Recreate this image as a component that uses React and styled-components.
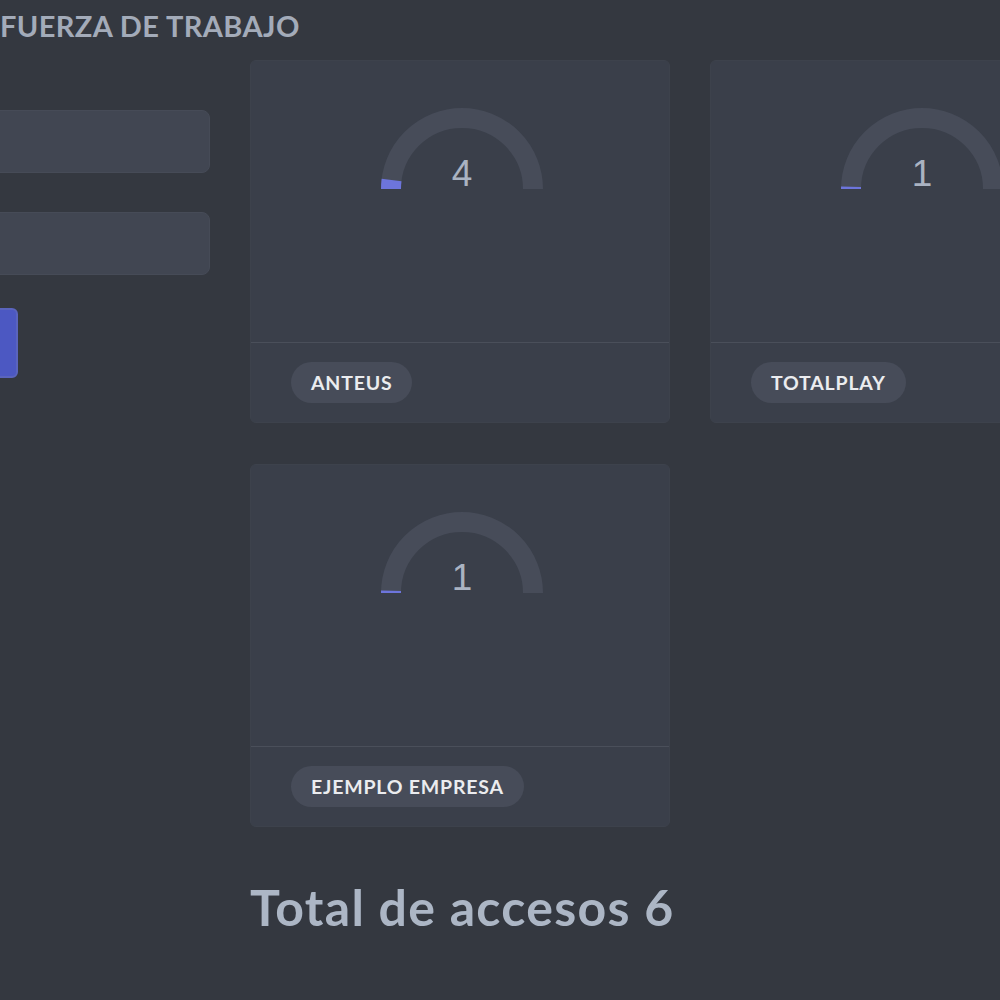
import React from "react";
import styled, { createGlobalStyle } from "styled-components";

const GlobalStyle = createGlobalStyle`
  html, body { margin: 0; padding: 0; }
  body {
    background: #343840;
    font-family: "Lato", "Noto Sans", sans-serif;
    overflow: hidden;
  }
`;

const Page = styled.div`
  width: 1000px;
  height: 1000px;
  overflow: hidden;
  padding-top: 7px;
  box-sizing: border-box;
`;

const Title = styled.h1`
  margin: 0;
  font-size: 29px;
  line-height: 38px;
  font-weight: 700;
  color: #a3abb9;
  letter-spacing: 0.4px;
`;

const Main = styled.div`
  display: grid;
  grid-template-columns: 410px auto;
  column-gap: 40px;
  margin-left: -200px;
  margin-top: 15px;
`;

const Sidebar = styled.div`
  display: flex;
  flex-direction: column;
  align-items: flex-start;
  padding-top: 50px;
`;

const Input = styled.div`
  width: 100%;
  height: 63px;
  box-sizing: border-box;
  background: #414652;
  border: 1px solid #464b57;
  border-radius: 8px;
  margin-bottom: ${(p) => p.$gap}px;
`;

const Button = styled.div`
  width: 218px;
  height: 70px;
  box-sizing: border-box;
  background: #4c58c2;
  border: 2px solid #5a64bd;
  border-radius: 6px;
`;

const Content = styled.div`
  display: flex;
  flex-direction: column;
`;

const Grid = styled.div`
  display: grid;
  grid-template-columns: repeat(2, 420px);
  gap: 41px 40px;
`;

const Card = styled.div`
  width: 420px;
  height: 363px;
  box-sizing: border-box;
  background: #3a3f4a;
  border: 1px solid #3d424c;
  border-radius: 6px;
  display: flex;
  flex-direction: column;
`;

const CardBody = styled.div`
  height: 282px;
  flex: none;
  display: flex;
  justify-content: center;
  padding-top: 46px;
  padding-left: 4px;
  box-sizing: border-box;
  border-bottom: 1px solid #4a4f5a;
`;

const CardFooter = styled.div`
  flex: 1;
  display: flex;
  align-items: center;
  padding-left: 40px;
`;

const Pill = styled.span`
  display: inline-flex;
  align-items: center;
  height: 41px;
  padding: 0 20px;
  border-radius: 21px;
  background: #474c59;
  color: #ebecef;
  font-size: 19.5px;
  font-weight: 700;
  letter-spacing: 0.8px;
`;

const Total = styled.h2`
  margin: 50px 0 0 0;
  font-size: 50px;
  line-height: 60px;
  font-weight: 700;
  color: #acb6c5;
  letter-spacing: 1.3px;
`;

function Gauge({ value, max = 100 }) {
  const cx = 85;
  const cy = 82;
  const r = 71;
  const theta = (Math.min(value, max) / max) * Math.PI;
  const ex = cx - r * Math.cos(theta);
  const ey = cy - r * Math.sin(theta);
  return (
    <svg width="170" height="90" viewBox="0 0 170 90">
      <path
        d={`M ${cx - r} ${cy} A ${r} ${r} 0 0 1 ${cx + r} ${cy}`}
        fill="none"
        stroke="#474c59"
        strokeWidth="20"
      />
      <path
        d={`M ${cx - r} ${cy} A ${r} ${r} 0 0 1 ${ex} ${ey}`}
        fill="none"
        stroke="#6d75dc"
        strokeWidth="20"
      />
      <text
        x={cx}
        y={cy - 3}
        textAnchor="middle"
        fontFamily="Liberation Sans, Arial, sans-serif"
        fontSize="37"
        fill="#aab3c2"
      >
        {value}
      </text>
    </svg>
  );
}

const companies = [
  { name: "ANTEUS", value: 4 },
  { name: "TOTALPLAY", value: 1 },
  { name: "EJEMPLO EMPRESA", value: 1 },
];

export default function App() {
  const total = companies.reduce((s, c) => s + c.value, 0);
  return (
    <>
      <GlobalStyle />
      <Page>
        <Title>FUERZA DE TRABAJO</Title>
        <Main>
          <Sidebar>
            <Input $gap={39} />
            <Input $gap={33} />
            <Button />
          </Sidebar>
          <Content>
            <Grid>
              {companies.map((c) => (
                <Card key={c.name}>
                  <CardBody>
                    <Gauge value={c.value} />
                  </CardBody>
                  <CardFooter>
                    <Pill>{c.name}</Pill>
                  </CardFooter>
                </Card>
              ))}
            </Grid>
            <Total>Total de accesos {total}</Total>
          </Content>
        </Main>
      </Page>
    </>
  );
}
